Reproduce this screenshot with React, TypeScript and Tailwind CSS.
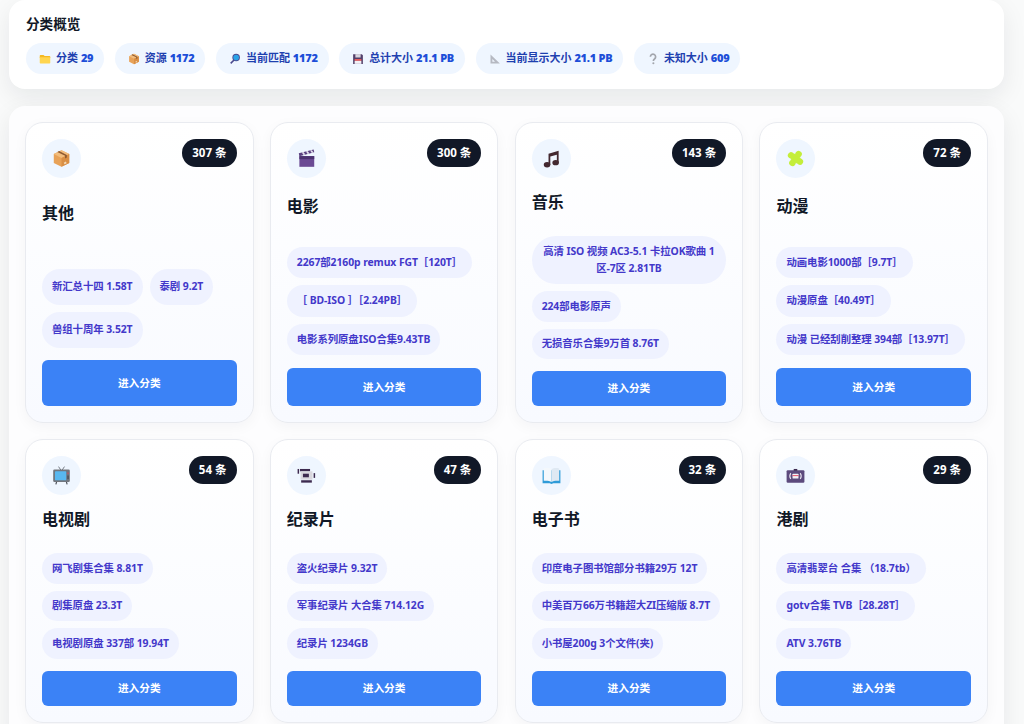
import type { ReactNode } from 'react';

const FONT = { fontFamily: '"Noto Sans", "Noto Sans CJK SC", sans-serif' };

function Svg({ size, children }: { size: number; children: ReactNode }) {
  return (
    <svg width={size} height={size} viewBox="0 0 32 32" className="shrink-0">
      {children}
    </svg>
  );
}

const Folder = ({ size }: { size: number }) => (
  <Svg size={size}>
    <path d="M2 7a2 2 0 0 1 2-2h8l3 3h13a2 2 0 0 1 2 2v3H2z" fill="#f5b921" />
    <path d="M2 11h28v15a2 2 0 0 1-2 2H4a2 2 0 0 1-2-2z" fill="#ffd54f" />
  </Svg>
);

const Box = ({ size }: { size: number }) => (
  <Svg size={size}>
    <path d="M16 2 29 8.5v15L16 30 3 23.500v-15z" fill="#e8a258" />
    <path d="M16 2 29 8.500 16 15 3 8.500z" fill="#f3bd7c" />
    <path d="M16 15 29 8.500v15L16 30z" fill="#d98f45" />
    <path d="m9 5 13 6.500v4.500l3-1.500v-4.500L12 3.500z" fill="#8d5a32" />
    <rect x="20" y="22" width="4" height="3" fill="#f4d9b5" transform="rotate(-26 22 23)" />
  </Svg>
);

const Search = ({ size }: { size: number }) => (
  <Svg size={size}>
    <path d="M12 17 3 26l3 3 9-9z" fill="#4b4a8f" />
    <circle cx="19" cy="12" r="10" fill="#4b4a8f" />
    <circle cx="19" cy="12" r="7.500" fill="#29a3e8" />
  </Svg>
);

const Floppy = ({ size }: { size: number }) => (
  <Svg size={size}>
    <path d="M3 3h23l3 3v23H3z" fill="#53406b" />
    <rect x="9" y="3" width="14" height="9" fill="#d8d5de" />
    <rect x="7" y="16" width="18" height="5" fill="#e85d5d" />
    <rect x="7" y="21" width="18" height="8" fill="#f2f0f5" />
  </Svg>
);

const Ruler = ({ size }: { size: number }) => (
  <Svg size={size}>
    <path fillRule="evenodd" d="M4 4 29 28H4zM9 16v7h7z" fill="#b6b9c2" />
  </Svg>
);

const Question = ({ size }: { size: number }) => (
  <Svg size={size}>
    <path d="M9 10a7 7 0 1 1 11 6c-2 1.500-3 2.500-3 5" fill="none" stroke="#a3a6ad" strokeWidth="4.500" />
    <circle cx="17" cy="27.500" r="2.800" fill="#a3a6ad" />
  </Svg>
);

const Clapper = ({ size }: { size: number }) => (
  <Svg size={size}>
    <rect x="4" y="12" width="25" height="18" fill="#6b4a94" />
    <rect x="4" y="12" width="25" height="5" fill="#4c3270" />
    <path d="M3 7 28 1l1 4.500L4 12z" fill="#5a4080" />
    <path d="m8 6 3 4 3-.8-3-4zM15 4.300l3 4 3-.8-3-4zM22 2.700l3 4 3-.8-3-4z" fill="#e6e1ef" />
  </Svg>
);

const Music = ({ size }: { size: number }) => (
  <Svg size={size}>
    <path d="M11 8 28 3v20h-3V9.500l-11 3.200V27h-3z" fill="#43282f" />
    <ellipse cx="8.500" cy="26.500" rx="5.500" ry="4.500" fill="#43282f" />
    <ellipse cx="23" cy="23" rx="5.500" ry="4.500" fill="#43282f" />
  </Svg>
);

const Puzzle = ({ size }: { size: number }) => (
  <Svg size={size}>
    <g fill="#c4ee3a" transform="rotate(35 16 16)">
      <rect x="10" y="10" width="12" height="12" />
      <circle cx="16" cy="7" r="5.500" />
      <circle cx="25" cy="16" r="5.500" />
      <circle cx="16" cy="25" r="5.500" />
      <circle cx="7" cy="16" r="5.500" />
    </g>
  </Svg>
);

const Tv = ({ size }: { size: number }) => (
  <Svg size={size}>
    <path d="m11 1 4 6M21 1l-4 6" stroke="#6b7078" strokeWidth="1.500" />
    <path d="m8 26-1.500 5M24 26l1.500 5" stroke="#4b4f57" strokeWidth="2" />
    <rect x="2" y="6" width="28" height="21" rx="2" fill="#71757d" />
    <rect x="5" y="9" width="19" height="15" rx="1" fill="#58b8f0" />
    <circle cx="27" cy="12" r="1.200" fill="#e8405a" />
    <rect x="25.800" y="16" width="2.400" height="6" fill="#4b4f57" />
  </Svg>
);

const Camera = ({ size }: { size: number }) => (
  <Svg size={size}>
    <rect x="1" y="5" width="2.500" height="8" fill="#3d2a4f" />
    <rect x="28" y="12" width="2.500" height="8" fill="#3d2a4f" />
    <rect x="5" y="5" width="17" height="4" fill="#3d2a4f" />
    <rect x="6" y="9" width="20" height="14" fill="#d9d7de" />
    <rect x="10" y="13" width="10" height="6" fill="#3d2a4f" />
    <rect x="7" y="24" width="18" height="4" fill="#3d2a4f" />
  </Svg>
);

const Book = ({ size }: { size: number }) => (
  <Svg size={size}>
    <path d="M1 7h30v22H19l-3 1.500-3-1.500H1z" fill="#2f9bd8" />
    <path d="M3 4c5-1 10-1 13 2v21c-3-2-8-2.500-13-2z" fill="#f4f8fc" />
    <path d="M29 4c-5-1-10-1-13 2v21c3-2 8-2.500 13-2z" fill="#dfe9f3" />
  </Svg>
);

const Radio = ({ size }: { size: number }) => (
  <Svg size={size}>
    <rect x="1" y="7" width="30" height="21" rx="2" fill="#5c4a7d" />
    <rect x="13" y="5" width="6" height="3" fill="#3d2a4f" />
    <rect x="11" y="13" width="10" height="8" rx="1" fill="#f3f1f6" />
    <path d="M8 12c-2 3-2 7 0 10M24 12c2 3 2 7 0 10" fill="none" stroke="#e8e4ef" strokeWidth="1.800" />
    <rect x="11" y="15.500" width="10" height="1.500" fill="#e8405a" />
  </Svg>
);

const STATS = [
  { Icon: Folder, label: '分类', value: '29' },
  { Icon: Box, label: '资源', value: '1172' },
  { Icon: Search, label: '当前匹配', value: '1172' },
  { Icon: Floppy, label: '总计大小', value: '21.1 PB' },
  { Icon: Ruler, label: '当前显示大小', value: '21.1 PB' },
  { Icon: Question, label: '未知大小', value: '609' },
];

const CATEGORIES = [
  { Icon: Box, name: '其他', count: '307 条', tags: ['新汇总十四 1.58T', '泰剧 9.2T', '兽组十周年 3.52T'] },
  { Icon: Clapper, name: '电影', count: '300 条', tags: ['2267部2160p remux FGT［120T］', '［ BD-ISO ］［2.24PB］', '电影系列原盘ISO合集9.43TB'] },
  { Icon: Music, name: '音乐', count: '143 条', tags: ['高清 ISO 视频 AC3-5.1 卡拉OK歌曲 1区-7区 2.81TB', '224部电影原声', '无损音乐合集9万首 8.76T'] },
  { Icon: Puzzle, name: '动漫', count: '72 条', tags: ['动画电影1000部［9.7T］', '动漫原盘［40.49T］', '动漫 已经刮削整理 394部［13.97T］'] },
  { Icon: Tv, name: '电视剧', count: '54 条', tags: ['网飞剧集合集 8.81T', '剧集原盘 23.3T', '电视剧原盘 337部 19.94T'] },
  { Icon: Camera, name: '纪录片', count: '47 条', tags: ['盗火纪录片 9.32T', '军事纪录片 大合集 714.12G', '纪录片 1234GB'] },
  { Icon: Book, name: '电子书', count: '32 条', tags: ['印度电子图书馆部分书籍29万 12T', '中美百万66万书籍超大ZI压缩版 8.7T', '小书屋200g 3个文件(夹)'] },
  { Icon: Radio, name: '港剧', count: '29 条', tags: ['高清翡翠台 合集 （18.7tb）', 'gotv合集 TVB［28.28T］', 'ATV 3.76TB'] },
];

function CategoryCard({ category }: { category: (typeof CATEGORIES)[number] }) {
  const { Icon, name, count, tags } = category;
  return (
    <div className="grid gap-3 rounded-[18px] border border-[#e9ebf0] bg-gradient-to-b from-white to-[#f8faff] p-4 shadow-[0_4px_14px_rgba(15,23,42,0.04)]">
      <div className="flex items-start justify-between">
        <div className="flex h-[39px] w-[39px] items-center justify-center rounded-full bg-[#eff6ff]">
          <Icon size={19} />
        </div>
        <span className="flex h-7 items-center rounded-full bg-[#111827] px-2.5 text-[11.5px] font-bold text-white">
          {count}
        </span>
      </div>
      <h3 className="h-[22px] text-base leading-[25px] font-bold text-[#111827]">{name}</h3>
      <p />
      <div className="flex flex-wrap gap-[7px]">
        {tags.map(tag => (
          <span
            key={tag}
            className="flex items-center rounded-[24px] bg-[#eff2ff] px-2.5 py-[6.5px] text-center text-[10.4px] leading-[17.5px] font-bold tracking-[-0.08px] text-[#4338ca]"
          >
            {tag}
          </span>
        ))}
      </div>
      <button className="flex min-h-[35px] items-center justify-center rounded-md bg-[#3b82f6] text-[10.7px] font-bold text-white">
        进入分类
      </button>
    </div>
  );
}

export default function App() {
  return (
    <div className="h-[724px] overflow-hidden bg-[#f9fafa] pr-5 pl-[9px]" style={FONT}>
      <div className="rounded-2xl bg-white px-[17px] pt-[14px] pb-[15px] shadow-[0_8px_24px_rgba(15,23,42,0.08)]">
        <h2 className="text-[13.6px] leading-[19px] font-bold text-[#111827]">分类概览</h2>
        <div className="mt-[10px] flex gap-[10.5px]">
          {STATS.map(({ Icon, label, value }) => (
            <div
              key={label}
              className="flex h-[31px] items-center gap-[5px] rounded-full bg-[#eff6ff] pr-[11px] pl-[13px] text-[11px] font-bold text-[#1e40af]"
            >
              <Icon size={12} />
              <span>
                {label} <strong className="tracking-[-0.25px] text-[#1d4ed8]">{value}</strong>
              </span>
            </div>
          ))}
        </div>
      </div>

      <div className="mt-[17px] rounded-2xl bg-[#fdfdfe] p-4 shadow-[0_8px_24px_rgba(15,23,42,0.08)]">
        <div className="grid grid-cols-4 gap-x-[16.3px] gap-y-4">
          {CATEGORIES.map(category => (
            <CategoryCard key={category.name} category={category} />
          ))}
        </div>
      </div>
    </div>
  );
}
